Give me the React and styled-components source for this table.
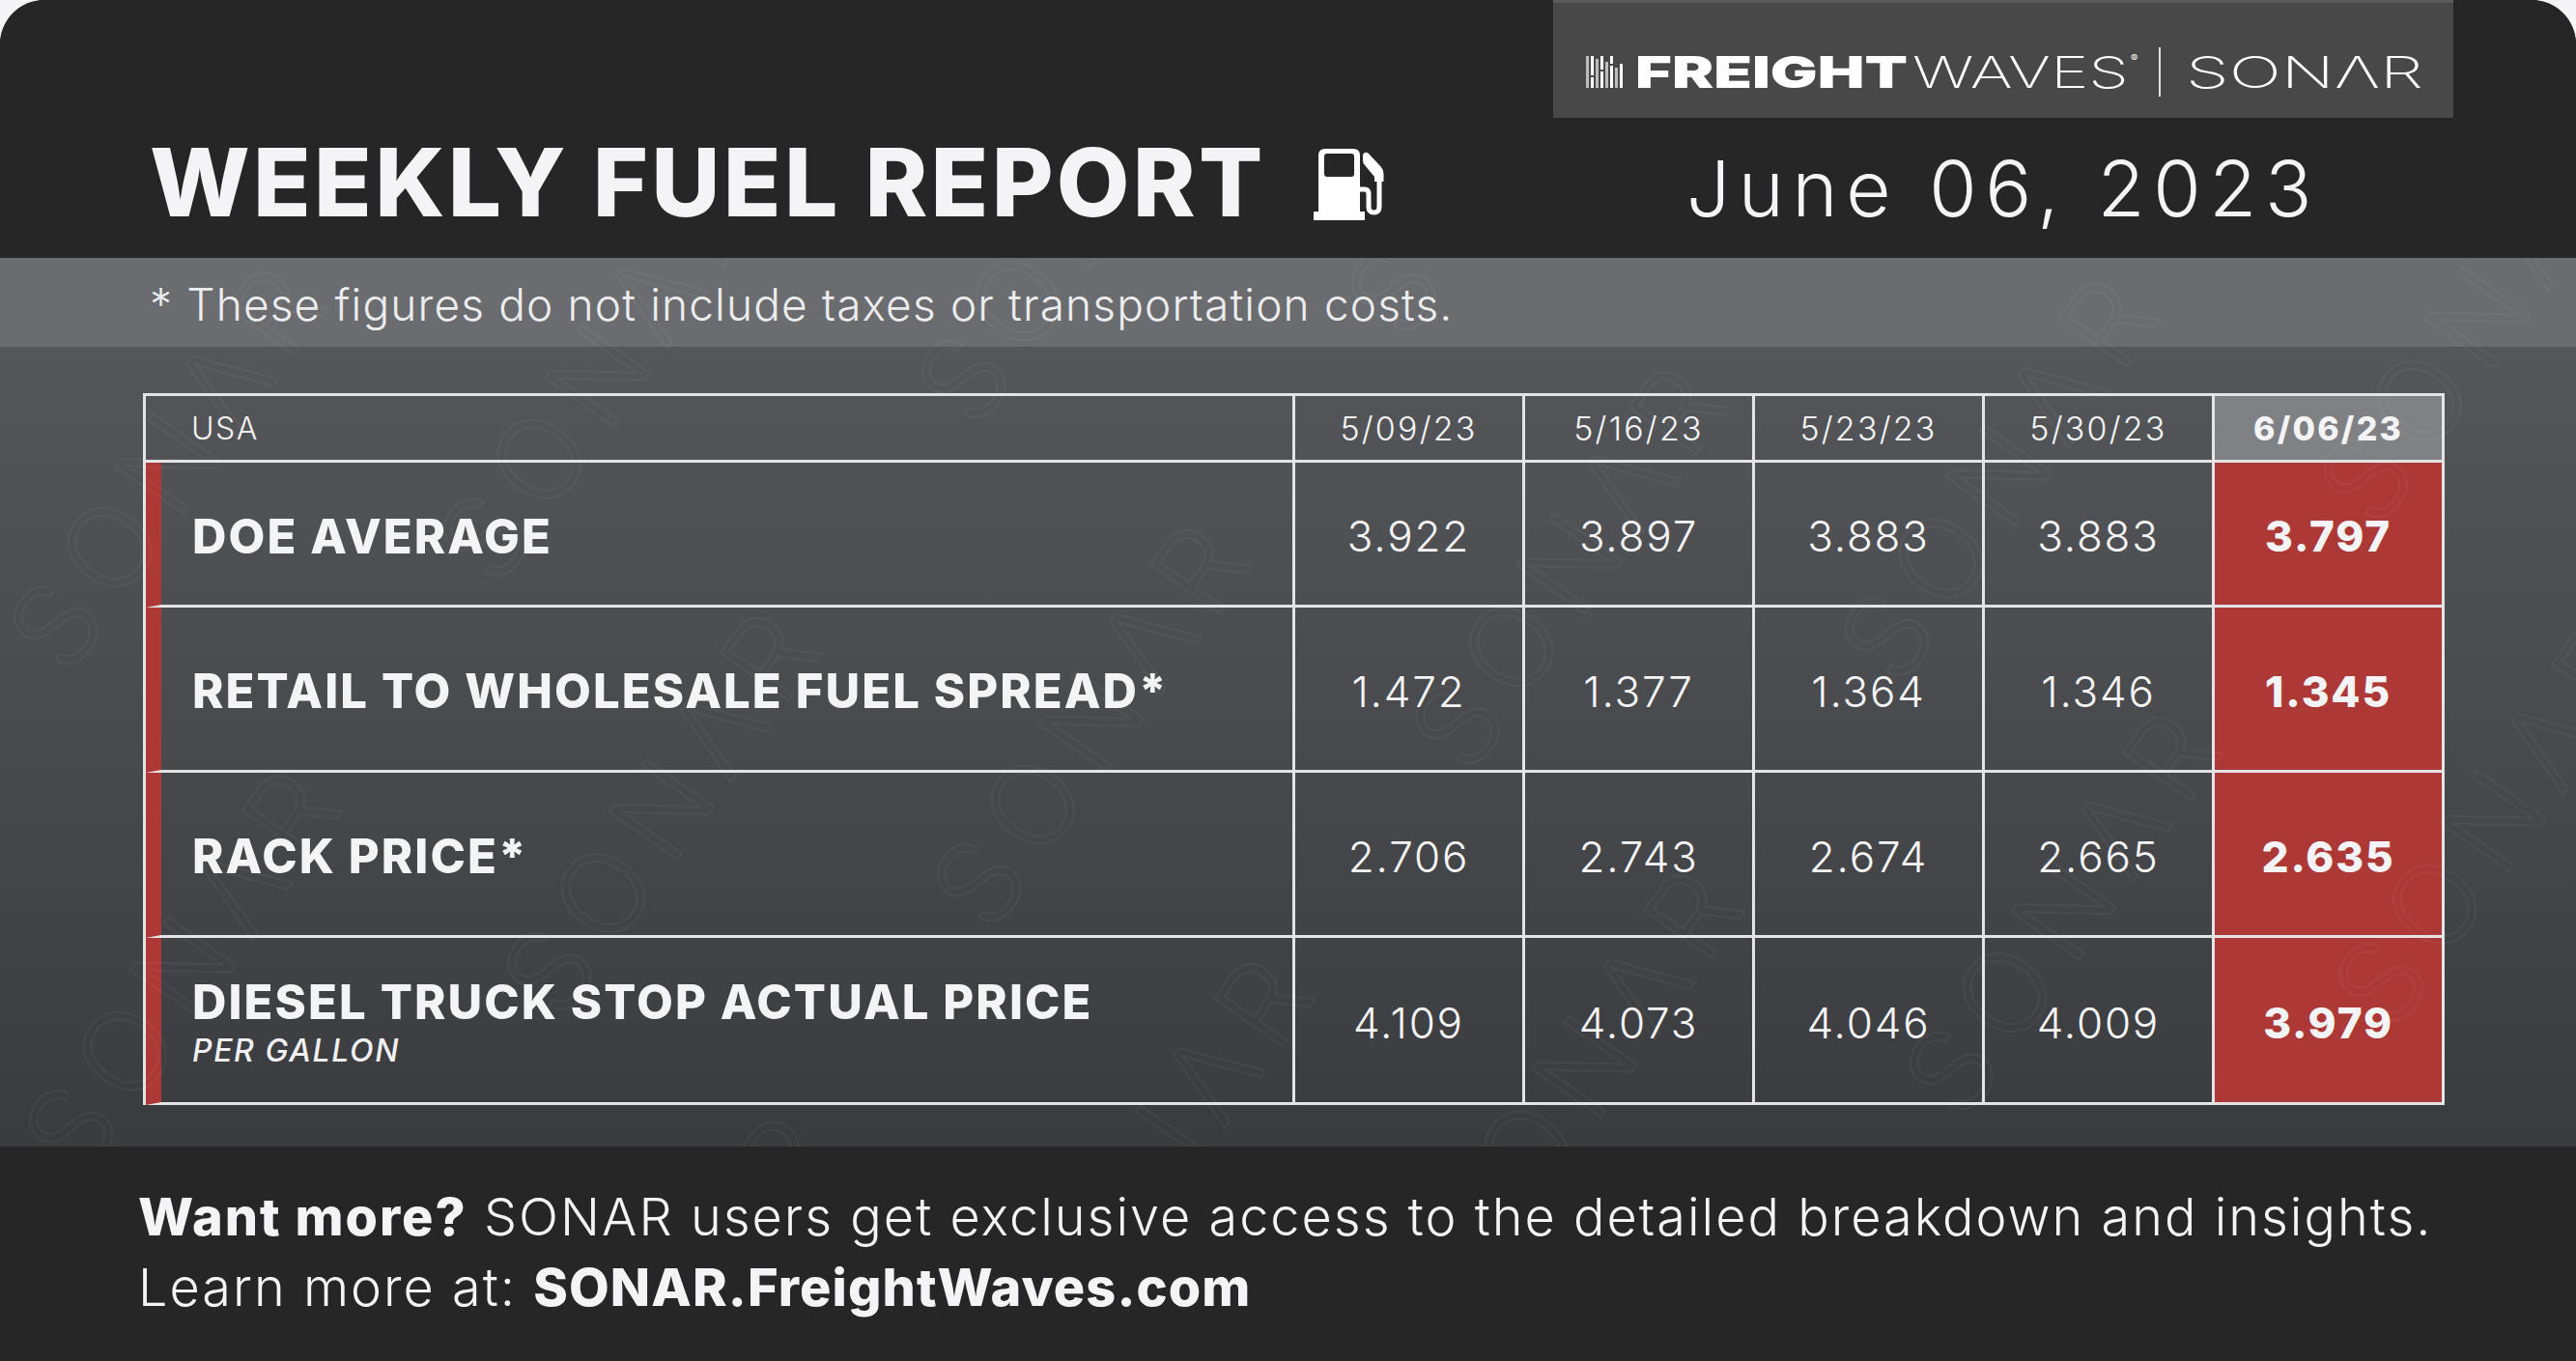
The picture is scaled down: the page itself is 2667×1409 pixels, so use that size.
import React from "react";
import styled, { createGlobalStyle } from "styled-components";

const Global = createGlobalStyle`
  html, body { margin: 0; padding: 0; background: #f5f5f7; }
  body { width: 2667px; height: 1409px; overflow: hidden; font-family: "Inter", "Liberation Sans", sans-serif; }
  * { box-sizing: border-box; }
`;

const Card = styled.div`
  width: 2667px;
  height: 1409px;
  display: flex;
  flex-direction: column;
  border-radius: 46px 46px 0 0;
  overflow: hidden;
  background: #262626;
  color: #f2f2f2;
`;

const Header = styled.header`
  height: 267px;
  flex-shrink: 0;
  display: flex;
  flex-direction: column;
  background: #262626;
`;

const TopBar = styled.div`
  height: 122px;
  display: flex;
  justify-content: flex-end;
  padding-right: 127px;
`;

const LogoBox = styled.div`
  width: 932px;
  height: 122px;
  background: #484848;
  border-top: 3px solid #5a5a5a;
  display: flex;
  align-items: flex-start;
  justify-content: center;
`;

const TitleRow = styled.div`
  flex: 1;
  display: flex;
  align-items: baseline;
  padding: 18px 127px 0 155px;
`;

const Title = styled.h1`
  margin: 0;
  font-size: 98px;
  line-height: 1;
  font-weight: 800;
  letter-spacing: 3.3px;
  color: #f4f4f6;
`;

const PumpWrap = styled.span`
  align-self: flex-start;
  margin: 14px 0 0 49px;
  display: flex;
`;

const DateText = styled.div`
  margin-left: auto;
  width: 932px;
  text-align: center;
  font-size: 80px;
  line-height: 1;
  font-weight: 300;
  letter-spacing: 8.6px;
  color: #f4f4f6;
`;

const Body = styled.section`
  position: relative;
  display: flex;
  flex-direction: column;
  flex-shrink: 0;
`;

const NoteBand = styled.div`
  height: 92px;
  background: #6b6c70;
  display: flex;
  align-items: center;
  padding: 4px 0 0 155px;
  font-size: 46px;
  font-weight: 300;
  letter-spacing: 1.15px;
  color: #ececee;
`;

const TableArea = styled.div`
  height: 828px;
  padding: 48px 137px 43px 148px;
  background: linear-gradient(180deg, #555659 0%, #4a4b4f 45%, #3a3b3e 100%);
`;

const Table = styled.div`
  display: grid;
  grid-template-columns: 1190px repeat(5, 238px);
  grid-template-rows: 69px 150px 171px 171px 173px;
  border-top: 3px solid #e4e4e6;
  border-left: 3px solid #e4e4e6;
  width: max-content;
`;

const Cell = styled.div`
  border-right: 3px solid #e4e4e6;
  border-bottom: 3px solid #e4e4e6;
  display: flex;
  align-items: center;
  justify-content: center;
  padding-top: ${(p) => (p.$head ? "0" : "5px")};
  background: ${(p) => (p.$current ? (p.$head ? "#808184" : "#ad3936") : "transparent")};
  font-size: ${(p) => (p.$head ? "34px" : "44px")};
  font-weight: ${(p) => (p.$current ? 800 : 300)};
  letter-spacing: ${(p) => (p.$head ? "2.2px" : "1.8px")};
  color: #f4f4f6;
`;

const LabelCell = styled.div`
  border-right: 3px solid #e4e4e6;
  border-bottom: 3px solid #e4e4e6;
  border-left: ${(p) => (p.$head ? "0" : "16px solid #ad3936")};
  display: flex;
  flex-direction: column;
  justify-content: center;
  padding-left: ${(p) => (p.$head ? "47px" : "32px")};
  padding-top: ${(p) => (p.$head ? "0" : "6px")};
`;

const HeadLabel = styled.span`
  font-size: 32px;
  font-weight: 300;
  letter-spacing: 1.5px;
`;

const RowLabel = styled.span`
  font-size: 49px;
  font-weight: 800;
  letter-spacing: 2.1px;
  line-height: 1.1;
  color: #f4f4f6;
`;

const SubLabel = styled.span`
  font-size: 32px;
  font-weight: 500;
  font-style: italic;
  letter-spacing: 1.6px;
  line-height: 1.2;
  margin-top: 4px;
  color: #f0f0f2;
`;

const Watermark = styled.div`
  position: absolute;
  inset: 0;
  overflow: hidden;
  pointer-events: none;
`;

const WatermarkField = styled.div`
  position: absolute;
  left: 50%;
  top: 50%;
  width: 4400px;
  transform: translate(-50%, -50%) rotate(-55deg);
  display: flex;
  flex-direction: column;
  gap: 170px;
`;

const WatermarkRow = styled.div`
  display: flex;
  gap: 260px;
  white-space: nowrap;
  padding-left: ${(p) => p.$shift}px;
`;

const WatermarkWord = styled.span`
  font-size: 118px;
  font-weight: 300;
  letter-spacing: 16px;
  color: transparent;
  -webkit-text-stroke: 2px rgba(255, 255, 255, 0.045);
`;

const Footer = styled.footer`
  height: 222px;
  flex-shrink: 0;
  background: #262626;
  padding: 36px 0 0 143px;
  font-size: 54px;
  line-height: 73px;
  font-weight: 300;
  letter-spacing: 2px;
  color: #f4f4f6;
`;

const FooterLine = styled.div`
  white-space: nowrap;
`;

const Strong = styled.strong`
  font-weight: 800;
  letter-spacing: ${(p) => (p.$wide ? "2px" : "1.1px")};
`;

const PumpIcon = () => (
  <svg width="74" height="74" viewBox="0 0 74 74" aria-hidden="true">
    <path d="M5 7 Q5 0 12 0 H41 Q48 0 48 7 V66 H5 Z" fill="#ffffff" />
    <rect x="0" y="65" width="53" height="9" fill="#ffffff" />
    <rect x="11" y="5" width="31" height="24" rx="3" fill="#262626" />
    <path
      d="M47 42 H53 Q57 42 57 47 V60 Q57 66 62.5 66 Q68 66 68 60 V30"
      fill="none"
      stroke="#ffffff"
      strokeWidth="5"
    />
    <path d="M51 6 Q53 2 57 5 L70 19 Q72.5 22 72.5 26 V34 H63 V29 L53 17 Q51 15 51 12 Z" fill="#ffffff" />
  </svg>
);

const LogoMark = () => (
  <svg width="932" height="119" viewBox="0 3 932 119" aria-label="FreightWaves SONAR">
    <g>
      {[0, 5, 10, 15, 20, 25, 30, 35].map((x, i) => {
        const tops = [58, 58, 61, 58, 64, 58, 70, 66];
        const light = i % 2 === 0;
        return (
          <rect
            key={x}
            x={34 + x}
            y={tops[i]}
            width="3"
            height={91 - tops[i]}
            fill={light ? "#bdbdbd" : "#ffffff"}
          />
        );
      })}
      <rect x="39" y="78" width="3" height="2" fill="#484848" />
      <rect x="49" y="72" width="3" height="2" fill="#484848" />
      <rect x="59" y="66" width="3" height="2" fill="#484848" />
    </g>
    <text x="85" y="91" fontFamily="Inter, 'DejaVu Sans', sans-serif" fontSize="45" fontWeight="900" fill="#ffffff" textLength="282" lengthAdjust="spacingAndGlyphs">FREIGHT</text>
    <text x="372" y="91" fontFamily="Inter, 'DejaVu Sans', sans-serif" fontSize="45" fontWeight="200" fill="#ffffff" textLength="224" lengthAdjust="spacingAndGlyphs">WAVES</text>
    <text x="598" y="64" fontFamily="Inter, sans-serif" fontSize="11" fill="#ffffff">®</text>
    <line x1="628" y1="49" x2="628" y2="100" stroke="#e0e0e0" strokeWidth="2" />
    <text x="655" y="91" fontFamily="Inter, 'DejaVu Sans', sans-serif" fontSize="45" fontWeight="200" fill="#ffffff" textLength="246" lengthAdjust="spacingAndGlyphs">SONΛR</text>
  </svg>
);

const dates = ["5/09/23", "5/16/23", "5/23/23", "5/30/23", "6/06/23"];
const rows = [
  { label: "DOE AVERAGE", values: ["3.922", "3.897", "3.883", "3.883", "3.797"] },
  { label: "RETAIL TO WHOLESALE FUEL SPREAD*", values: ["1.472", "1.377", "1.364", "1.346", "1.345"] },
  { label: "RACK PRICE*", values: ["2.706", "2.743", "2.674", "2.665", "2.635"] },
  { label: "DIESEL TRUCK STOP ACTUAL PRICE", sub: "PER GALLON", values: ["4.109", "4.073", "4.046", "4.009", "3.979"] },
];

export default function App() {
  return (
    <>
      <Global />
      <Card>
        <Header>
          <TopBar>
            <LogoBox>
              <LogoMark />
            </LogoBox>
          </TopBar>
          <TitleRow>
            <Title>WEEKLY FUEL REPORT</Title>
            <PumpWrap>
              <PumpIcon />
            </PumpWrap>
            <DateText>June 06, 2023</DateText>
          </TitleRow>
        </Header>
        <Body>
          <NoteBand>* These figures do not include taxes or transportation costs.</NoteBand>
          <TableArea>
            <Table>
              <LabelCell $head>
                <HeadLabel>USA</HeadLabel>
              </LabelCell>
              {dates.map((d, i) => (
                <Cell key={d} $head $current={i === dates.length - 1}>
                  {d}
                </Cell>
              ))}
              {rows.map((r) => (
                <React.Fragment key={r.label}>
                  <LabelCell>
                    <RowLabel>{r.label}</RowLabel>
                    {r.sub && <SubLabel>{r.sub}</SubLabel>}
                  </LabelCell>
                  {r.values.map((v, i) => (
                    <Cell key={i} $current={i === r.values.length - 1}>
                      {v}
                    </Cell>
                  ))}
                </React.Fragment>
              ))}
            </Table>
          </TableArea>
          <Watermark aria-hidden="true">
            <WatermarkField>
              {Array.from({ length: 8 }).map((_, ri) => (
                <WatermarkRow key={ri} $shift={(ri % 2) * 330}>
                  {Array.from({ length: 6 }).map((__, ci) => (
                    <WatermarkWord key={ci}>SONΛR</WatermarkWord>
                  ))}
                </WatermarkRow>
              ))}
            </WatermarkField>
          </Watermark>
        </Body>
        <Footer>
          <FooterLine>
            <Strong $wide>Want more?</Strong> SONAR users get exclusive access to the detailed breakdown and insights.
          </FooterLine>
          <FooterLine>
            Learn more at: <Strong>SONAR.FreightWaves.com</Strong>
          </FooterLine>
        </Footer>
      </Card>
    </>
  );
}
